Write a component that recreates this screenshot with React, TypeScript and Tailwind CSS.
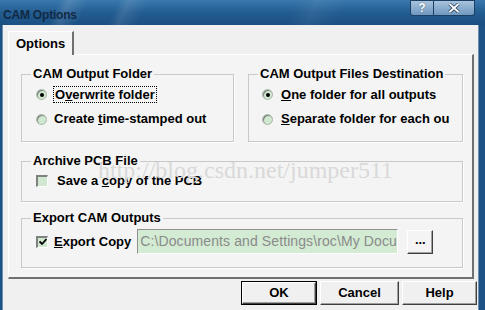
import type { ReactNode } from 'react';

const face = { fontFamily: '"Liberation Sans", Arial, sans-serif' };

function Radio({ checked }: { checked?: boolean }) {
  return (
    <span className="w-[11px] h-[11px] rounded-full bg-[#cfe8cf] border border-[#a8b8a8] flex items-center justify-center shrink-0 shadow-[inset_1px_1px_0_#808080]">
      {checked && <span className="w-[4px] h-[4px] rounded-full bg-black" />}
    </span>
  );
}

function Check({ checked }: { checked?: boolean }) {
  return (
    <span className="w-[12px] h-[12px] bg-[#cfe8cf] border-t-2 border-l-2 border-[#808080] border-b border-r border-b-white border-r-white flex items-center justify-center shrink-0">
      {checked && (
        <svg width="8" height="8" viewBox="0 0 8 8">
          <path d="M0.5 3.5 L3 6 L7.5 1" fill="none" stroke="#000" strokeWidth="1.8" />
        </svg>
      )}
    </span>
  );
}

function Group({ title, className, children }: { title: string; className: string; children: ReactNode }) {
  return (
    <div className={`relative border border-[#c9c9c9] shadow-[1px_1px_0_#ffffff] ${className}`}>
      <span className="absolute -top-[9px] left-[9px] px-[2px] bg-[#f4f4f4] text-[13px] font-bold text-black leading-[16px]">
        {title}
      </span>
      {children}
    </div>
  );
}

function Btn({ label, def, className }: { label: string; def?: boolean; className: string }) {
  return (
    <div
      className={`h-[24px] bg-[#f0f0f0] flex items-center justify-center text-[13px] font-bold text-black ${
        def ? 'border border-black' : ''
      } ${className}`}
    >
      <div className="w-full h-full border-t border-l border-white border-b border-r border-b-[#404040] border-r-[#404040] flex items-center justify-center shadow-[inset_-1px_-1px_0_#a0a0a0]">
        {label}
      </div>
    </div>
  );
}

export default function App() {
  return (
    <div className="w-[485px] h-[310px] overflow-hidden flex flex-col bg-[#f0f0f0]" style={face}>
      {/* Title bar */}
      <div className="h-[25px] shrink-0 relative bg-gradient-to-b from-[#3a78ad] via-[#235d92] to-[#1a4f82] flex items-start">
        <div className="absolute inset-0 bg-[linear-gradient(115deg,transparent_0%,transparent_12%,rgba(255,255,255,0.12)_14%,transparent_18%,transparent_24%,rgba(255,255,255,0.1)_26%,transparent_30%,transparent_60%,rgba(255,255,255,0.06)_64%,transparent_70%)]" />
        <span className="relative mt-[6px] ml-[3px] text-[12px] font-bold text-[#102a44] tracking-[-0.2px]">
          CAM Options
        </span>
        <div className="relative ml-auto mr-[10px] flex">
          <div className="w-[24px] h-[16px] border border-[#1d3f63] rounded-bl-[3px] bg-gradient-to-b from-[#a7c3dd] to-[#6f98c0] flex items-center justify-center text-white text-[12px] font-bold [text-shadow:0_0_1px_#203a55]">
            ?
          </div>
          <div className="w-[41px] h-[16px] border border-l-0 border-[#1d3f63] rounded-br-[3px] bg-gradient-to-b from-[#a7c3dd] to-[#6f98c0] flex items-center justify-center">
            <svg width="12" height="10" viewBox="0 0 12 10">
              <path d="M1.5 1 L10.5 9 M10.5 1 L1.5 9" stroke="#203a55" strokeWidth="3.4" />
              <path d="M1.5 1 L10.5 9 M10.5 1 L1.5 9" stroke="#fff" strokeWidth="1.8" />
            </svg>
          </div>
        </div>
      </div>

      <div className="flex flex-1">
        <div className="w-[3px] bg-[#1d5287] border-r border-[#6f8fb0]" />
        <div className="flex-1 flex flex-col bg-[#f0f0f0] relative">
          {/* Tab */}
          <div className="h-[29px] flex items-end pl-[5px]">
            <div className="h-[24px] w-[66px] bg-[#f4f4f4] border-t border-l border-white border-r-2 border-r-[#707070] flex items-center pl-[7px] text-[13px] font-bold text-black relative -mb-px z-10">
              Options
            </div>
          </div>
          {/* Tab panel */}
          <div className="ml-[5px] w-[466px] h-[225px] bg-[#f4f4f4] border-t border-l border-white border-r-2 border-b-2 border-r-[#707070] border-b-[#707070] flex flex-col pl-[12px] pt-[19px] relative">
            <div className="flex gap-[14px]">
              <Group title="CAM Output Folder" className="w-[213px] h-[68px]">
                <div className="flex flex-col pt-[11px] pl-[14px] gap-[8px] text-[13px] font-bold text-black">
                  <div className="flex items-center gap-[6px]">
                    <Radio checked />
                    <span className="border border-dotted border-black px-px leading-[15px]">
                      O<span className="underline">v</span>erwrite folder
                    </span>
                  </div>
                  <div className="flex items-center gap-[7px] h-[16px]">
                    <Radio />
                    <span>
                      Create <span className="underline">t</span>ime-stamped out
                    </span>
                  </div>
                </div>
              </Group>
              <Group title="CAM Output Files Destination" className="w-[215px] h-[68px]">
                <div className="flex flex-col pt-[11px] pl-[13px] gap-[8px] text-[13px] font-bold text-black">
                  <div className="flex items-center gap-[8px] h-[17px]">
                    <Radio checked />
                    <span>
                      <span className="underline">O</span>ne folder for all outputs
                    </span>
                  </div>
                  <div className="flex items-center gap-[8px] h-[16px] whitespace-nowrap overflow-hidden">
                    <Radio />
                    <span>
                      <span className="underline">S</span>eparate folder for each ou
                    </span>
                  </div>
                </div>
              </Group>
            </div>

            <Group title="Archive PCB File" className="mt-[19px] w-[442px] h-[41px]">
              <div className="flex items-center gap-[9px] pl-[14px] pt-[9px] text-[13px] font-bold text-black">
                <Check />
                <span>
                  Save a <span className="underline">c</span>opy of the PCB
                </span>
              </div>
            </Group>

            <Group title="Export CAM Outputs" className="mt-[16px] w-[442px] h-[50px]">
              <div className="flex items-center pl-[14px] pt-[10px] text-[13px] font-bold text-black">
                <Check checked />
                <span className="ml-[6px]">
                  <span className="underline">E</span>xport Copy
                </span>
                <div className="ml-[6px] w-[261px] h-[25px] bg-[#d3ebd3] border-t border-l border-[#909090] border-b border-r border-b-white border-r-white flex items-center pl-[2px] text-[14px] tracking-[0.1px] font-normal text-[#8a8a8a] whitespace-nowrap overflow-hidden">
                  C:\Documents and Settings\roc\My Docu
                </div>
                <div className="ml-[9px] w-[26px] h-[24px] border-t border-l border-white border-b border-r border-b-[#404040] border-r-[#404040] shadow-[inset_-1px_-1px_0_#a0a0a0] flex items-center justify-center text-[13px] font-bold pb-[4px]">
                  ...
                </div>
              </div>
            </Group>

            {/* watermark */}
            <div
              className="absolute left-[89px] top-[97px] text-[24px] text-[#d9d9d9] whitespace-nowrap pointer-events-none"
              style={{ fontFamily: '"Liberation Serif", "Times New Roman", serif' }}
            >
              http://blog.csdn.net/jumper511
            </div>
          </div>

          {/* Bottom buttons */}
          <div className="flex justify-end gap-[3px] mt-[2px] pr-[1px]">
            <Btn label="OK" def className="w-[76px]" />
            <Btn label="Cancel" className="w-[79px]" />
            <Btn label="Help" className="w-[75px]" />
          </div>
        </div>
        <div className="w-[7px] bg-[#1d5287] border-l border-[#6f8fb0]" />
      </div>
    </div>
  );
}
